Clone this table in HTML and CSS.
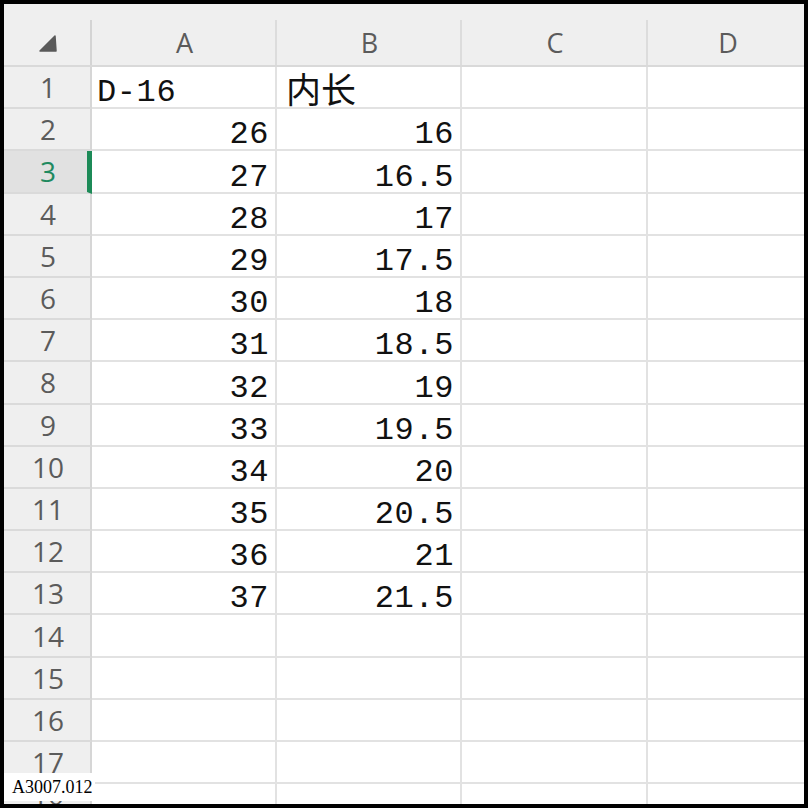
FILE: index.html
```html
<!DOCTYPE html>
<html>
<head>
<meta charset="utf-8">
<link rel="stylesheet" href="styles.css">
</head>
<body>
<div class="frame">
  <div class="sheet">
    <div class="hd corner"><svg class="tri" width="18" height="17" viewBox="0 0 18 17"><path d="M16 1 L17 16 L1 16 Z" fill="#5a5a5a" stroke="#5a5a5a" stroke-width="1.5" stroke-linejoin="round"/></svg></div>
    <div class="hd col">A</div>
    <div class="hd col">B</div>
    <div class="hd col">C</div>
    <div class="hd col">D</div>

    <div class="rh">1</div><div class="c l">D-16</div><div class="c l cjk">内长</div><div class="c"></div><div class="c"></div>
    <div class="rh">2</div><div class="c r">26</div><div class="c r">16</div><div class="c"></div><div class="c"></div>
    <div class="rh active">3</div><div class="c r">27</div><div class="c r">16.5</div><div class="c"></div><div class="c"></div>
    <div class="rh">4</div><div class="c r">28</div><div class="c r">17</div><div class="c"></div><div class="c"></div>
    <div class="rh">5</div><div class="c r">29</div><div class="c r">17.5</div><div class="c"></div><div class="c"></div>
    <div class="rh">6</div><div class="c r">30</div><div class="c r">18</div><div class="c"></div><div class="c"></div>
    <div class="rh">7</div><div class="c r">31</div><div class="c r">18.5</div><div class="c"></div><div class="c"></div>
    <div class="rh">8</div><div class="c r">32</div><div class="c r">19</div><div class="c"></div><div class="c"></div>
    <div class="rh">9</div><div class="c r">33</div><div class="c r">19.5</div><div class="c"></div><div class="c"></div>
    <div class="rh">10</div><div class="c r">34</div><div class="c r">20</div><div class="c"></div><div class="c"></div>
    <div class="rh">11</div><div class="c r">35</div><div class="c r">20.5</div><div class="c"></div><div class="c"></div>
    <div class="rh">12</div><div class="c r">36</div><div class="c r">21</div><div class="c"></div><div class="c"></div>
    <div class="rh">13</div><div class="c r">37</div><div class="c r">21.5</div><div class="c"></div><div class="c"></div>
    <div class="rh">14</div><div class="c"></div><div class="c"></div><div class="c"></div><div class="c"></div>
    <div class="rh">15</div><div class="c"></div><div class="c"></div><div class="c"></div><div class="c"></div>
    <div class="rh">16</div><div class="c"></div><div class="c"></div><div class="c"></div><div class="c"></div>
    <div class="rh">17</div><div class="c"></div><div class="c"></div><div class="c"></div><div class="c"></div>
    <div class="rh">18</div><div class="c"></div><div class="c"></div><div class="c"></div><div class="c"></div>
  </div>
  <div class="label">A3007.012</div>
</div>
</body>
</html>
```

FILE: styles.css
```css
html, body {
  margin: 0;
  padding: 0;
  background: #000;
}
body {
  width: 808px;
  height: 808px;
  padding: 4px;
  box-sizing: border-box;
}
.frame {
  position: relative;
  width: 800px;
  height: 800px;
  overflow: hidden;
  background: #fff;
}
.sheet {
  display: grid;
  grid-template-columns: 88px 185px 185px 186px 160px;
  grid-template-rows: 63px;
  grid-auto-rows: 42.2px;
}
.hd {
  position: relative;
  background: #efefef;
  border-bottom: 2px solid #d9d9d9;
  box-sizing: border-box;
  font-family: "Open Sans", "Liberation Sans", sans-serif;
  font-size: 27px;
  color: #5b5b5b;
  display: flex;
  align-items: center;
  justify-content: center;
  padding-top: 16px;
}
.hd::after {
  content: "";
  position: absolute;
  right: 0;
  top: 16px;
  bottom: 0;
  width: 2px;
  background: #dcdcdc;
}
.corner {
  justify-content: flex-start;
  padding-left: 35px;
  padding-top: 18px;
}
.corner::after {
  background: #d4d4d4;
}
.rh {
  background: #efefef;
  border-bottom: 2px solid #dadada;
  border-right: 2px solid #d6d6d6;
  box-sizing: border-box;
  font-family: "Open Sans", "Liberation Sans", sans-serif;
  font-size: 28px;
  color: #5b5b5b;
  display: flex;
  align-items: center;
  justify-content: center;
  padding-left: 2px;
  line-height: 1;
}
.rh.active {
  background: #e1e1e1;
  color: #1f8a60;
  border-right: 5px solid #1c8a57;
  padding-left: 5px;
}
.c {
  border-bottom: 2px solid #e2e2e2;
  border-right: 2px solid #e2e2e2;
  box-sizing: border-box;
  font-family: "Liberation Mono", "Noto Sans CJK SC", monospace;
  font-size: 32px;
  color: #111;
  display: flex;
  align-items: flex-end;
  line-height: 20px;
  padding-bottom: 4px;
  letter-spacing: 0.6px;
}
.c.r {
  justify-content: flex-end;
  padding-right: 6px;
}
.c.l {
  padding-left: 5px;
}
.c.cjk {
  font-family: "Noto Sans CJK SC", sans-serif;
  font-size: 35px;
  padding-left: 9px;
  padding-bottom: 4px;
  line-height: 30px;
  letter-spacing: 0;
}
.label {
  position: absolute;
  left: 0;
  top: 769px;
  width: 91px;
  height: 28px;
  background: #fff;
  font-family: "Liberation Serif", serif;
  font-size: 18px;
  color: #000;
  line-height: 28px;
  padding-left: 8px;
  box-sizing: border-box;
}
```
